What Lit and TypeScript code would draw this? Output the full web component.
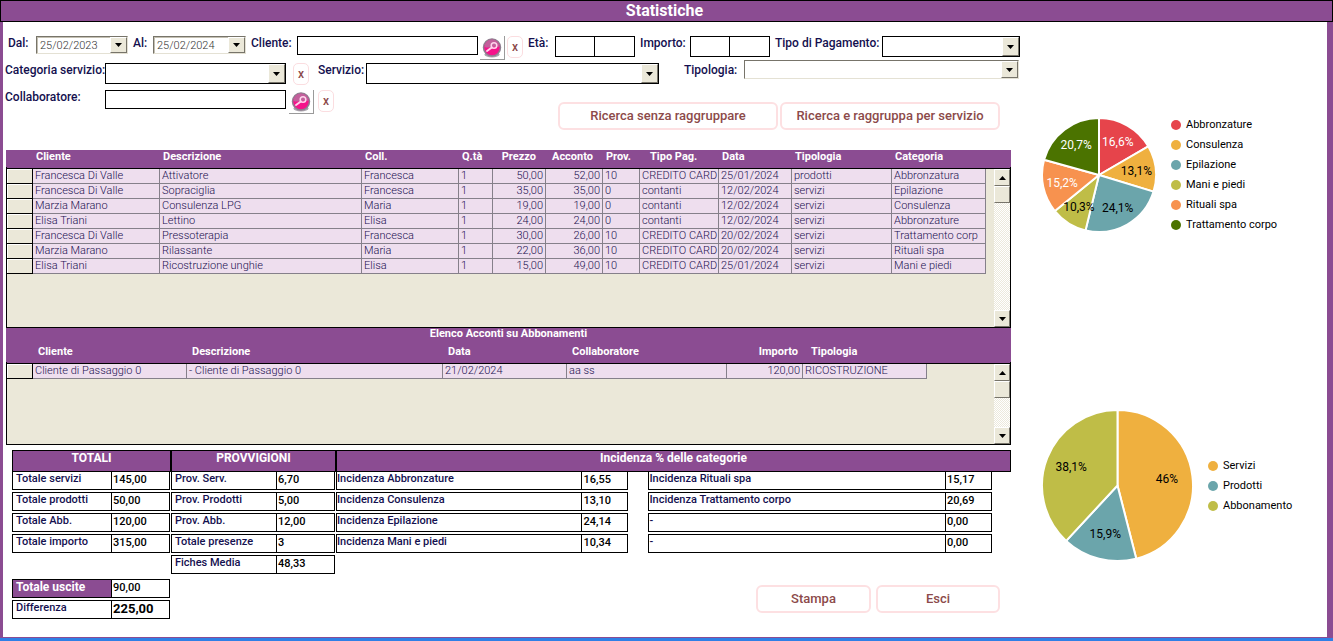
import { LitElement, html, svg, css, nothing } from "lit";
import { customElement, property } from "lit/decorators.js";
import { classMap } from "lit/directives/class-map.js";

interface Slice {
  name: string;
  value: number;
  color: string;
  light?: boolean;
}

interface Column {
  title: string;
  width?: number;
  kind?: "num" | "wide";
}

type Pair = [string, string];

const SALES_COLUMNS: Column[] = [
  { title: "Cliente", width: 127 },
  { title: "Descrizione" },
  { title: "Coll.", width: 97 },
  { title: "Q.tà", width: 34 },
  { title: "Prezzo", width: 53, kind: "num" },
  { title: "Acconto", width: 57, kind: "num" },
  { title: "Prov.", width: 37 },
  { title: "Tipo Pag.", width: 79, kind: "wide" },
  { title: "Data", width: 73 },
  { title: "Tipologia", width: 100 },
  { title: "Categoria", width: 94 },
];

const SALES: string[][] = [
  ["Francesca Di Valle", "Attivatore", "Francesca", "1", "50,00", "52,00", "10", "CREDITO CARD", "25/01/2024", "prodotti", "Abbronzatura"],
  ["Francesca Di Valle", "Sopraciglia", "Francesca", "1", "35,00", "35,00", "0", "contanti", "12/02/2024", "servizi", "Epilazione"],
  ["Marzia Marano", "Consulenza LPG", "Maria", "1", "19,00", "19,00", "0", "contanti", "12/02/2024", "servizi", "Consulenza"],
  ["Elisa Triani", "Lettino", "Elisa", "1", "24,00", "24,00", "0", "contanti", "12/02/2024", "servizi", "Abbronzature"],
  ["Francesca Di Valle", "Pressoterapia", "Francesca", "1", "30,00", "26,00", "10", "CREDITO CARD", "20/02/2024", "servizi", "Trattamento corp"],
  ["Marzia Marano", "Rilassante", "Maria", "1", "22,00", "36,00", "10", "CREDITO CARD", "20/02/2024", "servizi", "Rituali spa"],
  ["Elisa Triani", "Ricostruzione unghie", "Elisa", "1", "15,00", "49,00", "10", "CREDITO CARD", "25/01/2024", "servizi", "Mani e piedi"],
];

const DEPOSIT_COLUMNS: Column[] = [
  { title: "Cliente", width: 154 },
  { title: "Descrizione" },
  { title: "Data", width: 124 },
  { title: "Collaboratore", width: 160 },
  { title: "Importo", width: 76, kind: "num" },
  { title: "Tipologia", width: 124, kind: "wide" },
];

const DEPOSITS: string[][] = [
  ["Cliente di Passaggio 0", "- Cliente di Passaggio 0", "21/02/2024", "aa ss", "120,00", "RICOSTRUZIONE"],
];

const TOTALS: Pair[] = [
  ["Totale servizi", "145,00"],
  ["Totale prodotti", "50,00"],
  ["Totale Abb.", "120,00"],
  ["Totale importo", "315,00"],
];

const COMMISSIONS: Pair[] = [
  ["Prov. Serv.", "6,70"],
  ["Prov. Prodotti", "5,00"],
  ["Prov. Abb.", "12,00"],
  ["Totale presenze", "3"],
  ["Fiches Media", "48,33"],
];

const SHARES_LEFT: Pair[] = [
  ["Incidenza Abbronzature", "16,55"],
  ["Incidenza Consulenza", "13,10"],
  ["Incidenza Epilazione", "24,14"],
  ["Incidenza Mani e piedi", "10,34"],
];

const SHARES_RIGHT: Pair[] = [
  ["Incidenza Rituali spa", "15,17"],
  ["Incidenza Trattamento corpo", "20,69"],
  ["-", "0,00"],
  ["-", "0,00"],
];

const BY_CATEGORY: Slice[] = [
  { name: "Abbronzature", value: 16.6, color: "#e6444b", light: true },
  { name: "Consulenza", value: 13.1, color: "#efb03f" },
  { name: "Epilazione", value: 24.1, color: "#6ba5ab" },
  { name: "Mani e piedi", value: 10.3, color: "#bfbd47" },
  { name: "Rituali spa", value: 15.2, color: "#f7924f", light: true },
  { name: "Trattamento corpo", value: 20.7, color: "#4b7300", light: true },
];

const BY_KIND: Slice[] = [
  { name: "Servizi", value: 46, color: "#efb03f" },
  { name: "Prodotti", value: 15.9, color: "#6ba5ab" },
  { name: "Abbonamento", value: 38.1, color: "#bfbd47" },
];

const arrow = (up = false) => html`<svg class="arrow" width="7" height="4" viewBox="0 0 7 4" aria-hidden="true">
  <path d=${up ? "M0 4L3.5 0L7 4Z" : "M0 0L3.5 4L7 0Z"} fill="#000" />
</svg>`;

@customElement("pie-chart")
export class PieChart extends LitElement {
  @property({ attribute: false }) slices: Slice[] = [];
  @property({ type: Number }) size = 100;

  static styles = css`
    :host {
      display: flex;
      align-items: center;
      gap: 15px;
      font: 11px/20px Roboto, sans-serif;
      color: #000;
    }
    svg {
      display: block;
      flex: none;
    }
    .slice {
      stroke: #fff;
      stroke-width: 2;
      stroke-linejoin: round;
    }
    .value {
      font-size: 12px;
      text-anchor: middle;
      dominant-baseline: central;
    }
    .light {
      fill: #fff;
    }
    ul {
      list-style: none;
      margin: 0;
      padding: 0;
      white-space: nowrap;
    }
    li {
      display: flex;
      align-items: center;
      gap: 5px;
    }
  `;

  render() {
    const r = this.size / 2;
    const total = this.slices.reduce((sum, s) => sum + s.value, 0);
    const at = (turn: number, radius: number) => {
      const a = turn * 2 * Math.PI;
      return [r + radius * Math.sin(a), r - radius * Math.cos(a)];
    };
    let start = 0;
    const parts = this.slices.map((s) => {
      const end = start + s.value / total;
      const [x1, y1] = at(start, r);
      const [x2, y2] = at(end, r);
      const [tx, ty] = at((start + end) / 2, r * 0.66);
      const large = end - start > 0.5 ? 1 : 0;
      start = end;
      return {
        shape: svg`<path class="slice" fill=${s.color} d="M${r} ${r}L${x1} ${y1}A${r} ${r} 0 ${large} 1 ${x2} ${y2}Z" />`,
        label: svg`<text class=${s.light ? "value light" : "value"} x=${tx} y=${ty}>${String(s.value).replace(".", ",")}%</text>`,
      };
    });
    return html`
      <svg width=${this.size} height=${this.size} viewBox="0 0 ${this.size} ${this.size}" role="img" aria-label="Grafico a torta">
        ${parts.map((p) => p.shape)} ${parts.map((p) => p.label)}
      </svg>
      <ul>
        ${this.slices.map(
          (s) => html`<li>
            <svg width="10" height="10" viewBox="0 0 10 10"><circle cx="5" cy="5" r="5" fill=${s.color} /></svg>
            ${s.name}
          </li>`
        )}
      </ul>
    `;
  }
}

@customElement("data-sheet")
export class DataSheet extends LitElement {
  @property({ attribute: false }) columns: Column[] = [];
  @property({ attribute: false }) rows: string[][] = [];
  @property() heading = "";
  /* Columns that end well before the scroll bar, in a lower frame. */
  @property({ type: Boolean }) narrow = false;

  static styles = css`
    :host {
      display: block;
      font: 12px/14px Roboto, sans-serif;
      color: #1b1050;
    }
    .caption {
      height: 17px;
      background: #8b4c92;
      color: #fff;
      font-weight: 700;
      font-size: 11px;
      line-height: 12px;
      text-align: center;
    }
    .frame {
      display: grid;
      grid-template-columns: minmax(0, 1fr) 16px;
      column-gap: 8px;
      box-sizing: border-box;
      border: 1px solid #000;
      border-top: 0;
      border-image: linear-gradient(#8b4c92 18px, #000 18px) 1;
      background: linear-gradient(#8b4c92 18px, #000 18px, #000 19px, #ebe8d9 19px);
      height: 178px;
    }
    .narrow {
      column-gap: 67px;
      height: 100px;
    }
    table {
      width: 100%;
      table-layout: fixed;
      border-collapse: separate;
      border-spacing: 0;
      align-self: start;
    }
    .selector {
      width: 26px;
    }
    th {
      height: 19px;
      padding: 0 3px;
      box-sizing: border-box;
      vertical-align: top;
      text-align: left;
      color: #fff;
      font-size: 11px;
      font-weight: 700;
      line-height: 14px;
      white-space: nowrap;
    }
    td {
      height: 15px;
      box-sizing: border-box;
      padding: 0 2px;
      background: #eedeee;
      border-right: 1px solid #85808a;
      border-bottom: 1px solid #85808a;
      font-size: 11px;
      font-weight: 300;
      line-height: 14px;
      white-space: nowrap;
      overflow: hidden;
    }
    td.selector {
      background: #ebe8d9;
      border-color: #000;
      box-shadow: inset 1px 1px #fff;
    }
    th.num {
      padding-right: 10px;
    }
    .num {
      text-align: right;
    }
    th.wide {
      padding-left: 10px;
    }
    .narrow th {
      padding-left: 5px;
    }
    .narrow th.num {
      padding-right: 5px;
    }
    .narrow th.wide {
      padding-left: 8px;
    }
    .bar {
      display: flex;
      flex-direction: column;
      margin-top: 19px;
      background: repeating-conic-gradient(#fff 0 25%, #ece9dc 0 50%) 0 0 / 2px 2px;
    }
    .bar button,
    .thumb {
      display: grid;
      place-items: center;
      height: 17px;
      padding: 0;
      box-sizing: border-box;
      background: #ebe8d9;
      border: 1px solid;
      border-color: #fff #77746a #77746a #fff;
    }
    .space {
      flex: 1;
    }
  `;

  render() {
    return html`
      ${this.heading ? html`<div class="caption">${this.heading}</div>` : nothing}
      <div class=${classMap({ frame: true, narrow: this.narrow })}>
        <table>
          <thead>
            <tr>
              <th class="selector"></th>
              ${this.columns.map(
                (c) => html`<th scope="col" class=${c.kind ?? ""} width=${c.width ?? nothing}>${c.title}</th>`
              )}
            </tr>
          </thead>
          <tbody>
            ${this.rows.map(
              (row) => html`<tr>
                <td class="selector"></td>
                ${row.map((cell, i) => html`<td class=${this.columns[i].kind ?? ""}>${cell}</td>`)}
              </tr>`
            )}
          </tbody>
        </table>
        <div class="bar">
          <button aria-label="Scorri su">${arrow(true)}</button>
          <div class="thumb"></div>
          <div class="space"></div>
          <button aria-label="Scorri giù">${arrow()}</button>
        </div>
      </div>
    `;
  }
}

@customElement("app-root")
export class AppRoot extends LitElement {
  static styles = css`
    :host {
      display: flex;
      flex-direction: column;
      box-sizing: border-box;
      min-height: 100vh;
      background: #fff;
      border-bottom: 3px solid #2f7fe6;
      font: 500 12px/15px Roboto, sans-serif;
      color: #14104f;
    }
    h1 {
      margin: 0;
      padding-right: 4px;
      background: #8b4c92;
      border: 1px solid #000;
      color: #fff;
      font-size: 16px;
      font-weight: 700;
      line-height: 20px;
      text-align: center;
    }
    main {
      flex: 1;
      display: grid;
      grid-template-columns: minmax(0, 1fr) 285px;
      column-gap: 22px;
      border: solid #8b4c92;
      border-width: 0 6px 1px 3px;
    }
    .filters {
      padding-top: 14px;
    }
    .row {
      display: grid;
      align-items: start;
      white-space: nowrap;
    }
    .row-main {
      grid-template-columns: 33px 92px 25px 93px 51px minmax(0, 1fr) 27px 18px 32px 80px 55px 80px 112px 138px;
      height: 24px;
    }
    .row-service {
      grid-template-columns: 102px 181px 23px 57px minmax(0, 1fr) 85px 275px;
      padding-right: 1px;
      height: 30px;
    }
    .row-staff {
      grid-template-columns: 102px 181px 28px 20px minmax(0, 1fr);
      height: 60px;
    }
    .row-main label {
      padding-left: 5px;
    }
    .row-service label,
    .row-staff label {
      padding-left: 2px;
    }
    .row-service .far {
      padding-left: 9px;
    }
    .row-service .farther {
      padding-left: 25px;
    }
    .low {
      margin-top: 3px;
    }
    .end {
      justify-self: end;
    }
    input,
    select {
      box-sizing: border-box;
      width: 100%;
      min-width: 0;
      margin: 0;
      padding: 0 4px;
      border: 1px solid #000;
      border-radius: 0;
      background: #fff;
      font: inherit;
      color: inherit;
      appearance: none;
    }
    input {
      height: 19px;
    }
    .pair {
      display: grid;
      grid-template-columns: 1fr 1fr;
    }
    .pair input {
      height: 21px;
    }
    .pair input + input {
      border-left: 0;
    }
    .date {
      display: flex;
      box-sizing: border-box;
      height: 18px;
      border: 1px solid;
      border-color: #77746a #e4e1d4 #e4e1d4 #77746a;
      box-shadow: inset 1px 1px #c4c0b2;
    }
    .date input {
      flex: 1;
      height: 16px;
      padding: 1px 3px 0;
      border: 0;
      background: none;
      font-size: 11px;
      font-weight: 300;
      color: #333;
    }
    .cap {
      display: grid;
      place-items: center;
      flex: none;
      box-sizing: border-box;
      width: 17px;
      padding: 0;
      background: #ebe8d9;
      border: 1px solid;
      border-color: #fff #77746a #77746a #fff;
    }
    .drop {
      display: grid;
      grid-template-columns: minmax(0, 1fr) 18px;
      height: 21px;
    }
    .drop select {
      grid-area: 1 / 1 / 2 / 3;
      height: 100%;
    }
    .drop .cap {
      grid-area: 1 / 2;
      margin: 1px 1px 1px 0;
      pointer-events: none;
    }
    .sunken {
      height: 19px;
    }
    .sunken select {
      border-color: #77746a #e4e1d4 #e4e1d4 #77746a;
    }
    .lookup {
      display: grid;
      place-items: center;
      box-sizing: border-box;
      width: 25px;
      height: 24px;
      padding: 0;
      background: #fff;
      border: solid #9a9a9a;
      border-width: 0 1px 1px 0;
    }
    .clear {
      width: 16px;
      height: 22px;
      padding: 0;
      background: #fff;
      border: 1px solid #fbdde0;
      border-radius: 5px;
      color: #8c4a4a;
      font: 500 12px/15px Roboto, sans-serif;
    }
    .actions {
      display: flex;
      justify-content: flex-end;
      gap: 2px;
      padding: 12px 20px 0 0;
    }
    .action {
      box-sizing: border-box;
      width: 220px;
      height: 28px;
      padding: 0;
      background: #fff;
      border: 2px solid #fde0e2;
      border-radius: 6px;
      color: #8c4a4a;
      font: 500 13px/20px Roboto, sans-serif;
    }
    .sheets {
      padding: 0 9px 0 3px;
    }
    .totals {
      display: grid;
      grid-template-columns: 159px 165px minmax(0, 1fr);
      padding: 5px 9px 0 9px;
      align-items: start;
    }
    h2 {
      box-sizing: border-box;
      height: 22px;
      margin: 0;
      background: #8b4c92;
      border: 1px solid #000;
      color: #fff;
      font-size: 12px;
      font-weight: 700;
      line-height: 15px;
      text-align: center;
    }
    dl {
      display: grid;
      gap: 2px;
      margin: -1px 1px 0 0;
    }
    .item {
      display: grid;
      grid-template-columns: minmax(0, 1fr) 58px;
      height: 19px;
      border: 1px solid #000;
      box-sizing: border-box;
      font-size: 11px;
    }
    dt {
      padding-left: 3px;
      line-height: 14px;
    }
    dd {
      margin: 0;
      padding-left: 1px;
      border-left: 1px solid #000;
      color: #000;
      line-height: 16px;
    }
    .shares {
      display: grid;
      grid-template-columns: 293fr 344fr;
      column-gap: 19px;
      margin-right: 18px;
    }
    .shares .item {
      grid-template-columns: minmax(0, 1fr) 46px;
    }
    .shares dt {
      padding-left: 0;
    }
    .footer {
      display: flex;
      justify-content: space-between;
      padding: 5px 20px 18px 9px;
    }
    .balance {
      width: 158px;
      margin: 0;
    }
    .outgoing dt {
      background: #8b4c92;
      color: #fff;
      font-size: 12px;
      font-weight: 700;
    }
    .difference dd {
      font-size: 13px;
      font-weight: 700;
    }
    .commands {
      display: flex;
      gap: 5px;
      padding-top: 6px;
    }
    .commands .action {
      width: 124px;
    }
    .commands .print {
      width: 115px;
    }
    .charts {
      display: flex;
      flex-direction: column;
      gap: 175px;
      padding-top: 93px;
    }
  `;

  private drop(id: string, extra = "") {
    return html`<div class="drop ${extra}">
      <select id=${id}><option></option></select>
      <span class="cap">${arrow()}</span>
    </div>`;
  }

  private date(id: string, value: string) {
    return html`<div class="date">
      <input id=${id} type="text" .value=${value} />
      <button class="cap" aria-label="Apri calendario">${arrow()}</button>
    </div>`;
  }

  private lookup(name: string) {
    return html`<button class="lookup end" aria-label=${name}>
      <svg width="20" height="20" viewBox="0 0 20 20" aria-hidden="true">
        <ellipse cx="10" cy="16.5" rx="7.5" ry="3" fill="#aaa4ad" />
        <circle cx="10" cy="9.5" r="8.5" fill="#f5128a" stroke="#8f7f90" stroke-width="1.5" />
        <path d="M2.5 9A7.5 7.5 0 0 1 17.5 9C13 7 8 11 2.5 9Z" fill="#c2609c" />
        <circle cx="12" cy="7.5" r="2.8" fill="none" stroke="#ffd3ec" stroke-width="1.5" />
        <path d="M9.800 9.500L5 13" stroke="#ffd3ec" stroke-width="2" stroke-linecap="round" />
      </svg>
    </button>`;
  }

  private items(list: Pair[]) {
    return html`<dl>
      ${list.map(([name, value]) => html`<div class="item"><dt>${name}</dt><dd>${value}</dd></div>`)}
    </dl>`;
  }

  render() {
    return html`
      <h1>Statistiche</h1>
      <main>
        <div>
          <form class="filters" @submit=${(e: Event) => e.preventDefault()}>
            <div class="row row-main">
              <label for="from">Dal:</label>
              ${this.date("from", "25/02/2023")}
              <label for="to">Al:</label>
              ${this.date("to", "25/02/2024")}
              <label for="client">Cliente:</label>
              <input id="client" type="text" />
              ${this.lookup("Cerca cliente")}
              <button class="clear end" aria-label="Cancella cliente">x</button>
              <label for="age">Età:</label>
              <div class="pair">
                <input id="age" type="text" />
                <input type="text" aria-label="Età massima" />
              </div>
              <label for="amount">Importo:</label>
              <div class="pair">
                <input id="amount" type="text" />
                <input type="text" aria-label="Importo massimo" />
              </div>
              <label for="payment">Tipo di Pagamento:</label>
              ${this.drop("payment")}
            </div>
            <div class="row row-service">
              <label class="low" for="category">Categoria servizio:</label>
              ${this.drop("category", "low")}
              <button class="clear end low" aria-label="Cancella categoria">x</button>
              <label class="low far" for="service">Servizio:</label>
              ${this.drop("service", "low")}
              <label class="low farther" for="kind">Tipologia:</label>
              ${this.drop("kind", "sunken")}
            </div>
            <div class="row row-staff">
              <label for="staff">Collaboratore:</label>
              <input id="staff" type="text" />
              ${this.lookup("Cerca collaboratore")}
              <button class="clear end" aria-label="Cancella collaboratore">x</button>
              <div class="actions">
                <button class="action">Ricerca senza raggruppare</button>
                <button class="action">Ricerca e raggruppa per servizio</button>
              </div>
            </div>
          </form>
          <section class="sheets">
            <data-sheet .columns=${SALES_COLUMNS} .rows=${SALES}></data-sheet>
            <data-sheet narrow heading="Elenco Acconti su Abbonamenti" .columns=${DEPOSIT_COLUMNS} .rows=${DEPOSITS}></data-sheet>
          </section>
          <section class="totals">
            <div>
              <h2>TOTALI</h2>
              ${this.items(TOTALS)}
            </div>
            <div>
              <h2>PROVVIGIONI</h2>
              ${this.items(COMMISSIONS)}
            </div>
            <div>
              <h2>Incidenza % delle categorie</h2>
              <div class="shares">${this.items(SHARES_LEFT)} ${this.items(SHARES_RIGHT)}</div>
            </div>
          </section>
          <section class="footer">
            <dl class="balance">
              <div class="item outgoing"><dt>Totale uscite</dt><dd>90,00</dd></div>
              <div class="item difference"><dt>Differenza</dt><dd>225,00</dd></div>
            </dl>
            <div class="commands">
              <button class="action print">Stampa</button>
              <button class="action">Esci</button>
            </div>
          </section>
        </div>
        <aside class="charts">
          <pie-chart .slices=${BY_CATEGORY} .size=${114}></pie-chart>
          <pie-chart .slices=${BY_KIND} .size=${151}></pie-chart>
        </aside>
      </main>
    `;
  }
}
